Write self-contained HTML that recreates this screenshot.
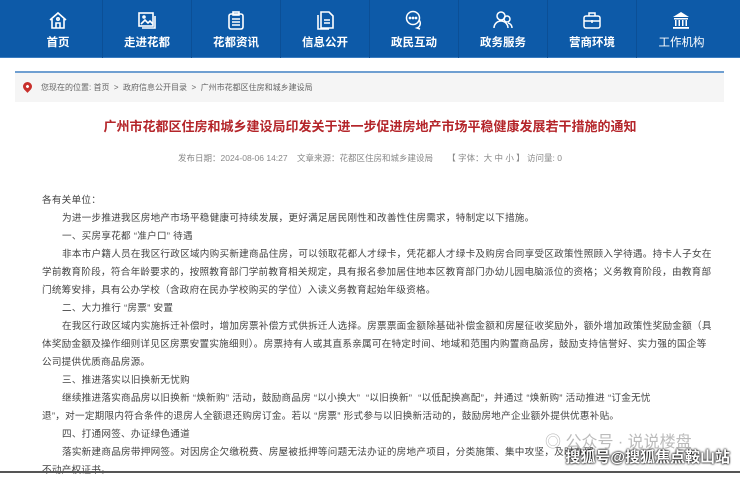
<!DOCTYPE html>
<html><head><meta charset="utf-8"><style>
*{margin:0;padding:0;box-sizing:border-box}
body{width:740px;height:473px;overflow:hidden;background:#fff;font-family:"Liberation Sans","Noto Sans CJK SC",sans-serif;position:relative}
.nav{position:absolute;left:0;top:0;width:740px;height:58px;background:#0d5aa8;border-bottom:1px solid #3a7cc0}
.it{position:absolute;top:0;width:89px;height:58px;color:#fff;text-align:center;border-right:1px solid #0b4f96}
.it svg{position:absolute;left:34px;top:10px}
.it span{position:absolute;left:0;right:0;top:34px;font-size:11.5px;font-weight:bold}
.bc{position:absolute;left:15px;top:71px;width:709px;height:31px;background:#f5f5f5;border-top:2px solid #6f9fd1;font-size:8px;color:#666;line-height:30px;padding-left:26px}
.pin{position:absolute;left:8px;top:9px;width:9px;height:9px;border-radius:50% 50% 50% 0;transform:rotate(-45deg);background:#c8302c}
.pin:after{content:"";position:absolute;left:3px;top:3px;width:3px;height:3px;background:#fff;border-radius:50%}
h1{position:absolute;left:0;width:740px;top:116px;text-align:center;font-size:13px;color:#b4252a;font-weight:bold}
.meta{position:absolute;left:0;width:740px;top:152px;text-align:center;font-size:8.5px;color:#888}
.body{position:absolute;left:42px;top:192px;width:674px;font-size:9.6px;color:#444;line-height:18px;letter-spacing:0.25px}
.body p{text-indent:20px}
.wm{position:absolute;right:10px;top:446px;font-size:15px;color:#fff;font-weight:bold;text-shadow:0 0 2px #000,0 0 2px #000}
.wm2{position:absolute;left:545px;top:428px;font-size:16px;color:#bbb}
.line{position:absolute;left:0;top:471px;width:740px;height:2px;background:#555}
</style></head><body>
<div class="nav">
<div class="it" style="left:14px"><svg width="20" height="20" viewBox="0 0 20 20" fill="none" stroke="#fff" stroke-width="1.6"><path d="M2 10L10 3l8 7M4 9v9h12V9M8 18v-5h4v5"/><circle cx="10" cy="9" r="1.2"/></svg><span>首页</span></div>
<div class="it" style="left:103px"><svg width="20" height="20" viewBox="0 0 20 20" fill="none" stroke="#fff" stroke-width="1.6"><rect x="2" y="3" width="14" height="13"/><path d="M4 14l4-4 3 3 2-2 3 3M18 6v12H5"/><circle cx="7" cy="7" r="1"/></svg><span>走进花都</span></div>
<div class="it" style="left:192px"><svg width="20" height="20" viewBox="0 0 20 20" fill="none" stroke="#fff" stroke-width="1.6"><rect x="3" y="4" width="14" height="15" rx="2"/><rect x="7" y="2" width="6" height="3"/><path d="M6 9h8M6 12h8M6 15h8"/></svg><span>花都资讯</span></div>
<div class="it" style="left:281px"><svg width="20" height="20" viewBox="0 0 20 20" fill="none" stroke="#fff" stroke-width="1.6"><path d="M6 2h8l4 4v12H6z M3 5v14h11"/><path d="M9 10h6M9 13h6"/></svg><span>信息公开</span></div>
<div class="it" style="left:370px"><svg width="20" height="20" viewBox="0 0 20 20" fill="none" stroke="#fff" stroke-width="1.5"><circle cx="9" cy="8" r="6.5"/><path d="M15 10a5 5 0 0 1-2 8l3 1"/><circle cx="6" cy="8" r=".6"/><circle cx="9" cy="8" r=".6"/><circle cx="12" cy="8" r=".6"/></svg><span>政民互动</span></div>
<div class="it" style="left:459px"><svg width="20" height="20" viewBox="0 0 20 20" fill="none" stroke="#fff" stroke-width="1.5"><circle cx="8" cy="6" r="4"/><path d="M1 18a7 7 0 0 1 14 0"/><circle cx="14" cy="9" r="3"/><path d="M15 13a5 5 0 0 1 4 5"/></svg><span>政务服务</span></div>
<div class="it" style="left:548px"><svg width="20" height="20" viewBox="0 0 20 20" fill="none" stroke="#fff" stroke-width="1.5"><rect x="2" y="6" width="16" height="12" rx="2"/><path d="M7 6V3h6v3M2 11h16M10 10v3"/></svg><span>营商环境</span></div>
<div class="it" style="left:637px;border-right:none"><svg width="20" height="20" viewBox="0 0 20 20" fill="#fff"><path d="M10 2l8 5H2z"/><rect x="3" y="8" width="14" height="1.5"/><rect x="4" y="10" width="1.5" height="6"/><rect x="7.5" y="10" width="1.5" height="6"/><rect x="11" y="10" width="1.5" height="6"/><rect x="14.5" y="10" width="1.5" height="6"/><rect x="2" y="17" width="16" height="1.8"/></svg><span style="font-weight:normal">工作机构</span></div>
</div>
<div class="bc"><div class="pin"></div>您现在的位置: 首页 &nbsp;&gt;&nbsp; 政府信息公开目录 &nbsp;&gt;&nbsp; 广州市花都区住房和城乡建设局</div>
<h1>广州市花都区住房和城乡建设局印发关于进一步促进房地产市场平稳健康发展若干措施的通知</h1>
<div class="meta">发布日期：2024-08-06 14:27 &nbsp;&nbsp; 文章来源：花都区住房和城乡建设局 &nbsp;&nbsp;&nbsp;&nbsp; 【 字体：大 中 小 】 访问量: 0</div>
<div class="body">
<p style="text-indent:0">各有关单位：</p>
<p>为进一步推进我区房地产市场平稳健康可持续发展，更好满足居民刚性和改善性住房需求，特制定以下措施。</p>
<p>一、买房享花都 “准户口” 待遇</p>
<p>非本市户籍人员在我区行政区域内购买新建商品住房，可以领取花都人才绿卡，凭花都人才绿卡及购房合同享受区政策性照顾入学待遇。持卡人子女在<br>学前教育阶段，符合年龄要求的，按照教育部门学前教育相关规定，具有报名参加居住地本区教育部门办幼儿园电脑派位的资格；义务教育阶段，由教育部<br>门统筹安排，具有公办学校（含政府在民办学校购买的学位）入读义务教育起始年级资格。</p>
<p>二、大力推行 “房票” 安置</p>
<p>在我区行政区域内实施拆迁补偿时，增加房票补偿方式供拆迁人选择。房票票面金额除基础补偿金额和房屋征收奖励外，额外增加政策性奖励金额（具<br>体奖励金额及操作细则详见区房票安置实施细则）。房票持有人或其直系亲属可在特定时间、地域和范围内购置商品房，鼓励支持信誉好、实力强的国企等<br>公司提供优质商品房源。</p>
<p>三、推进落实以旧换新无忧购</p>
<p>继续推进落实商品房以旧换新 “焕新购” 活动，鼓励商品房 “以小换大” &nbsp;“以旧换新” &nbsp;“以低配换高配”，并通过 “焕新购” 活动推进 “订金无忧<br>退”，对一定期限内符合条件的退房人全额退还购房订金。若以 “房票” 形式参与以旧换新活动的，鼓励房地产企业额外提供优惠补贴。</p>
<p>四、打通网签、办证绿色通道</p>
<p>落实新建商品房带押网签。对因房企欠缴税费、房屋被抵押等问题无法办证的房地产项目，分类施策、集中攻坚，及时办理<br>不动产权证书。</p>
</div>
<div class="wm2">◎ 公众号 · 说说楼盘</div>
<div class="wm">搜狐号@搜狐焦点鞍山站</div>
<div class="line"></div>
</body></html>
